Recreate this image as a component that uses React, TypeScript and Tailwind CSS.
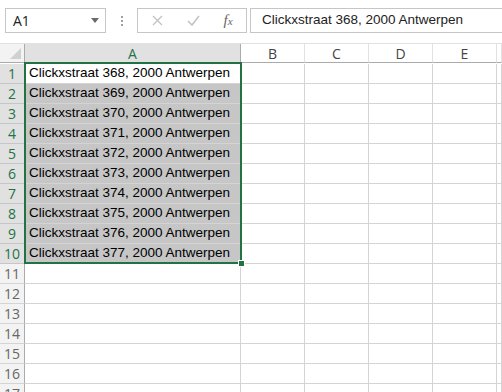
import React from "react";

const rows = Array.from({ length: 17 }, (_, i) => i + 1);
const cols = ["B", "C", "D", "E", ""];

export default function App() {
  const cellFont = { fontFamily: '"Liberation Sans", Arial, sans-serif' };
  return (
    <div className="w-[502px] h-[392px] overflow-hidden bg-white relative" style={{ fontFamily: '"Open Sans", "Noto Sans", sans-serif' }}>
      {/* Top bar */}
      <div className="h-[44px] flex items-start pt-[8px] pl-[5px] border-b border-[#e1e1e1] bg-white">
        <div className="w-[101px] h-[25px] border border-[#c6c6c6] flex items-center justify-between pl-[7px] pr-[6px]">
          <span className="text-[14px] text-[#222]">A1</span>
          <svg width="8" height="5" viewBox="0 0 8 5"><path d="M0 0h8L4 5z" fill="#6a6a6a" /></svg>
        </div>
        <div className="w-[31px] h-[25px] flex flex-col items-center justify-center gap-[2px]">
          <div className="w-[2px] h-[2px] bg-[#a0a0a0]" />
          <div className="w-[2px] h-[2px] bg-[#a0a0a0]" />
          <div className="w-[2px] h-[2px] bg-[#a0a0a0]" />
        </div>
        <div className="w-[110px] h-[25px] border border-[#c6c6c6] flex items-center">
          <div className="w-[38px] flex justify-center">
            <svg width="11" height="11" viewBox="0 0 11 11"><path d="M1 1l9 9M10 1l-9 9" stroke="#c2c2c2" strokeWidth="1.3" /></svg>
          </div>
          <div className="w-[34px] flex justify-center">
            <svg width="13" height="11" viewBox="0 0 13 11"><path d="M1 6l4 4 7-9" stroke="#c2c2c2" strokeWidth="1.6" fill="none" /></svg>
          </div>
          <div className="flex-1 flex justify-center">
            <span className="text-[15px] italic text-[#666]" style={{ fontFamily: '"Liberation Serif", serif' }}>f<span className="text-[11px]">x</span></span>
          </div>
        </div>
        <div className="ml-[3px] flex-1 h-[25px] border border-r-0 border-[#c6c6c6] flex items-center pl-[11px]">
          <span className="text-[13.5px] text-[#222]" style={cellFont}>Clickxstraat 368, 2000 Antwerpen</span>
        </div>
      </div>
      {/* Grid */}
      <div className="grid grid-cols-[25px_216px_64px_64px_64px_64px_1fr] auto-rows-[20px]">
        {/* header row */}
        <div className="h-[19px] bg-[#f3f3f3] border-r border-b border-[#ababab] relative">
          <svg className="absolute right-[3px] bottom-[3px]" width="11" height="11" viewBox="0 0 11 11"><path d="M11 0v11H0z" fill="#d0d0d0" /></svg>
        </div>
        <div className="h-[19px] bg-[#e1e1e1] border-r border-b border-[#ababab] flex items-center justify-center text-[14px] text-[#217346]">A</div>
        {cols.map((c, i) => (
          <div key={i} className="h-[19px] bg-white border-r border-b border-[#ababab] border-r-[#e1e1e1] flex items-center justify-center text-[14px] text-[#444]">{c}</div>
        ))}
        {rows.map((r) => (
          <React.Fragment key={r}>
            <div className={`border-r border-b border-[#ababab] flex items-center justify-center text-[14px] ${r <= 10 ? "bg-[#e1e1e1] text-[#217346] border-b-[#c6c6c6]" : "bg-[#f3f3f3] text-[#666] border-b-[#d4d4d4]"}`}>{r}</div>
            <div className={`border-r border-b border-[#d4d4d4] flex items-center pl-[4px] text-[13.5px] text-black ${r >= 2 && r <= 10 ? "bg-[#c6c6c6] border-[#b4b4b4]" : "bg-white"}`} style={cellFont}>
              {r <= 10 ? `Clickxstraat ${367 + r}, 2000 Antwerpen` : ""}
            </div>
            {cols.map((c, i) => (
              <div key={i} className="border-r border-b border-[#d4d4d4] bg-white" />
            ))}
          </React.Fragment>
        ))}
      </div>
      {/* selection border */}
      <div className="absolute left-[24px] top-[62px] w-[218px] h-[202px] border-2 border-[#217346] pointer-events-none" />
      <div className="absolute left-[238px] top-[260px] w-[7px] h-[7px] bg-[#217346] border border-white" />
    </div>
  );
}
